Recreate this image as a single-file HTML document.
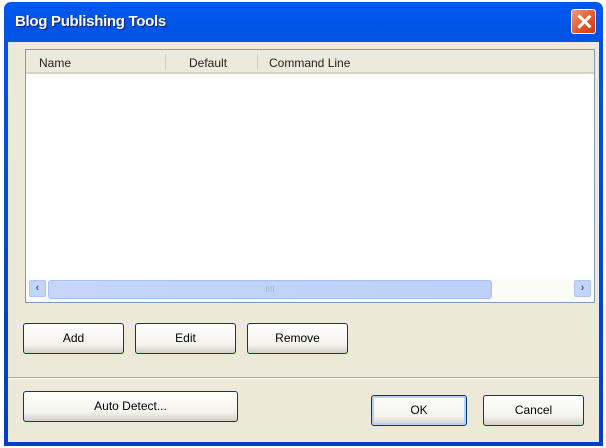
<!DOCTYPE html>
<html><head><style>
*{margin:0;padding:0;box-sizing:border-box}
body{width:606px;height:448px;background:#fff;position:relative;overflow:hidden;font-family:"Liberation Sans",sans-serif;font-size:12px;color:#000}
.win{position:absolute;left:4px;top:2px;width:599px;height:444px;background:linear-gradient(#0058ee,#0054e3 30px,#0040c8);border-radius:7px 7px 0 0}
.title{position:absolute;left:11px;top:11px;color:#fff;font-weight:bold;font-size:15px;text-shadow:1px 1px #0a1e80;letter-spacing:-0.3px}
.close{position:absolute;left:567px;top:7px;width:25px;height:25px;border:1px solid #fff;border-radius:3px;background:linear-gradient(135deg,#f09a7c,#e0542a 60%,#c83c14)}
.close:before,.close:after{content:"";position:absolute;left:11px;top:3px;width:2.5px;height:17px;background:#fff;transform:rotate(45deg)}
.close:after{transform:rotate(-45deg)}
.client{position:absolute;left:4px;top:40px;width:591px;height:400px;background:#ece9d8}
.list{position:absolute;left:17px;top:7px;width:570px;height:254px;border:1px solid #7f9db9;background:#fff}
.hdr{position:absolute;left:0;top:0;width:568px;height:24px;background:#ebeadb;border-bottom:2px solid #d6d2c2}
.hdr span{position:absolute;top:6px;color:#222}
.sep{position:absolute;top:4px;width:1px;height:16px;background:#d0cdb8}
.sb{position:absolute;left:0;top:229px;width:568px;height:23px;background:#fbfbf8}
.arr{position:absolute;top:1px;width:17px;height:17px;border-radius:2px;background:#c2d4f8;border:1px solid #b0c4ee;color:#4d6185;font-weight:bold;font-size:11px;text-align:center;line-height:15px}
.thumb{position:absolute;left:22px;top:1px;width:444px;height:19px;border:1px solid #a8c0f0;border-radius:3px;background:linear-gradient(90deg,#c6d6fa,#bcd0f8);color:#9bb;font-size:8px;text-align:center;line-height:17px}
.btn{position:absolute;height:31px;border:1px solid #003c74;border-radius:3px;background:linear-gradient(#fff,#f4f3ee 70%,#d6d0c5);text-align:center;line-height:29px;font-size:12px}
.ok{border-color:#003c74;box-shadow:inset 0 0 0 2px #b8cff5}
.hr{position:absolute;left:0;top:335px;width:591px;height:2px;border-top:1px solid #aca899;border-bottom:1px solid #fff}
</style></head><body>
<div class="win">
<div class="title">Blog Publishing Tools</div>
<div class="close"></div>
<div class="client">
<div class="list">
<div class="hdr"><span style="left:13px">Name</span><div class="sep" style="left:139px"></div><span style="left:163px">Default</span><div class="sep" style="left:231px"></div><span style="left:243px">Command Line</span></div>
<div class="sb"><div class="arr" style="left:3px">&lsaquo;</div><div class="thumb">IIII</div><div class="arr" style="left:548px">&rsaquo;</div></div>
</div>
<div class="btn" style="left:15px;top:281px;width:101px">Add</div>
<div class="btn" style="left:127px;top:281px;width:101px">Edit</div>
<div class="btn" style="left:239px;top:281px;width:101px">Remove</div>
<div class="hr"></div>
<div class="btn" style="left:15px;top:349px;width:215px">Auto Detect...</div>
<div class="btn ok" style="left:363px;top:353px;width:96px">OK</div>
<div class="btn" style="left:475px;top:353px;width:101px">Cancel</div>
</div>
</div>
</body></html>
